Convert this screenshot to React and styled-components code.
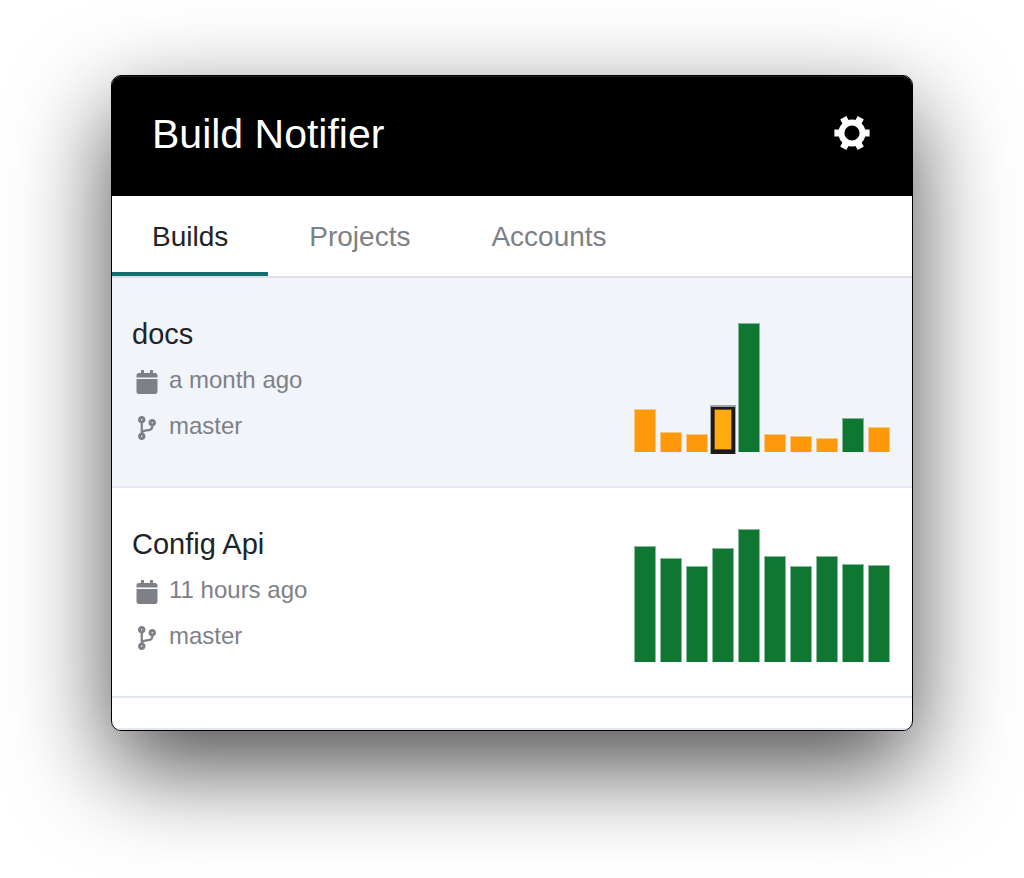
import { useState } from 'react';
import styled, { createGlobalStyle, css } from 'styled-components';
import { FaCalendar, FaCodeBranch } from 'react-icons/fa';

const theme = {
  text: '#212326',
  muted: '#7e8087',
  accent: '#0f706e',
  success: '#107733',
  warning: '#ff990a',
  warningActive: '#ffaa0e',
  line: '#e4e8f2',
  hover: '#f1f5fa',
};

const GlobalStyle = createGlobalStyle`
  *,
  *::before,
  *::after {
    box-sizing: border-box;
  }

  body {
    margin: 0;
    background: #ffffff;
    color: ${theme.text};
    font-family: 'Liberation Sans', Helvetica, Arial, sans-serif;
  }

  button {
    padding: 0;
    border: none;
    background: none;
    font: inherit;
    cursor: pointer;
  }
`;

const Page = styled.main`
  padding: 75px 111px 147px;
  overflow: hidden;
`;

const Window = styled.div`
  overflow: hidden;
  border: 1px solid #000000;
  border-radius: 10px;
  background: #ffffff;
  box-shadow: 0 36px 96px rgba(0, 0, 0, 0.7);
`;

const Header = styled.header`
  display: flex;
  align-items: center;
  justify-content: space-between;
  height: 120px;
  padding: 0 40px 4px;
  background: #000000;
  box-shadow: inset 0 1px 0 #1b1d1f;
`;

const Title = styled.h1`
  margin: 0;
  color: #ffffff;
  font-weight: 400;
  font-size: 41px;
  line-height: 48px;
`;

const SettingsBtn = styled.button`
  display: flex;
  padding-bottom: 2px;
  color: #ffffff;
`;

const TabList = styled.nav`
  display: flex;
  gap: 1px;
  border-bottom: 2px solid #dedfe0;
`;

const Tab = styled.button`
  && {
    height: 80px;
    padding: 6px 40px 0;
    border-bottom: 4px solid transparent;
    color: ${theme.muted};
    font-size: 28px;
    line-height: 32px;

    ${({ $active }) =>
      $active &&
      css`
        border-color: ${theme.accent};
        color: ${theme.text};
      `}
  }
`;

const BuildList = styled.ul`
  margin: 0;
  padding: 0;
  list-style: none;
`;

const BuildItem = styled.li`
  display: flex;
  justify-content: space-between;
  padding: 40px 22px 34px 20px;
  border-bottom: 2px solid ${theme.line};
  background: ${({ $active }) => ($active ? theme.hover : '#ffffff')};
`;

const NextItem = styled.li`
  height: 32px;
  border-bottom: 2px solid ${theme.line};
`;

const BuildName = styled.h2`
  margin: 0 0 16px;
  font-weight: 400;
  font-size: 29px;
  line-height: 32px;
`;

const BuildMeta = styled.p`
  display: flex;
  align-items: center;
  gap: 10px;
  margin: 0 0 18px;
  padding-left: 3px;
  color: ${theme.muted};
  font-size: 24px;
  line-height: 28px;

  &:last-child {
    margin-bottom: 0;
  }

  svg {
    margin-top: 4px;
  }
`;

const Chart = styled.div`
  display: flex;
  align-items: flex-end;
  gap: 4px;
  height: 134px;
`;

const Bar = styled.div`
  width: 22px;
  border: 1px solid ${({ $passed }) => ($passed ? '#10773380' : '#ff990a80')};
  border-bottom: none;
  background: ${({ $passed }) => ($passed ? theme.success : theme.warning)};
  background-clip: padding-box;

  ${({ $selected }) =>
    $selected &&
    css`
      border: 2px solid #1b1b1b;
      background: ${theme.warningActive};
      box-shadow:
        inset 0 0 0 1px #6b4a14,
        0 1px 0 1px #1b1b1b,
        0 0 0 2px #1b1b1b60;
    `}
`;

const builds = [
  {
    name: 'docs',
    finished: 'a month ago',
    branch: 'master',
    active: true,
    selected: 3,
    passed: [4, 8],
    bars: [43, 20, 18, 45, 129, 18, 16, 14, 34, 25],
  },
  {
    name: 'Config Api',
    finished: '11 hours ago',
    branch: 'master',
    passed: [0, 1, 2, 3, 4, 5, 6, 7, 8, 9],
    bars: [116, 104, 96, 114, 133, 106, 96, 106, 98, 97],
  },
];

const tabs = ['Builds', 'Projects', 'Accounts'];

const GearIcon = () => (
  <svg width="40" height="36" viewBox="-20 -18 40 36" aria-hidden="true">
    <circle r="10.6" fill="none" stroke="currentColor" strokeWidth="6" />
    {[0, 60, 120].map(angle => (
      <path
        key={angle}
        d="M-17.6 -3.5h6v7h-6zM11.6 -3.5h6v7h-6z"
        fill="currentColor"
        transform={`rotate(${angle})`}
      />
    ))}
  </svg>
);

const BuildChart = ({ bars, passed, selected }) => (
  <Chart>
    {bars.map((height, index) => (
      <Bar
        key={index}
        $passed={passed.includes(index)}
        $selected={index === selected}
        style={{ height }}
      />
    ))}
  </Chart>
);

const App = () => {
  const [currentTab, setCurrentTab] = useState('Builds');

  return (
    <>
      <GlobalStyle />
      <Page>
        <Window>
          <Header>
            <Title>Build Notifier</Title>
            <SettingsBtn type="button" aria-label="Settings">
              <GearIcon />
            </SettingsBtn>
          </Header>
          <TabList>
            {tabs.map(tab => (
              <Tab
                key={tab}
                type="button"
                $active={tab === currentTab}
                onClick={() => setCurrentTab(tab)}
              >
                {tab}
              </Tab>
            ))}
          </TabList>
          <BuildList>
            {builds.map(({ name, finished, branch, active, ...chart }) => (
              <BuildItem key={name} $active={active}>
                <div>
                  <BuildName>{name}</BuildName>
                  <BuildMeta>
                    <FaCalendar />
                    {finished}
                  </BuildMeta>
                  <BuildMeta>
                    <FaCodeBranch />
                    {branch}
                  </BuildMeta>
                </div>
                <BuildChart {...chart} />
              </BuildItem>
            ))}
            <NextItem />
          </BuildList>
        </Window>
      </Page>
    </>
  );
};

export default App;
